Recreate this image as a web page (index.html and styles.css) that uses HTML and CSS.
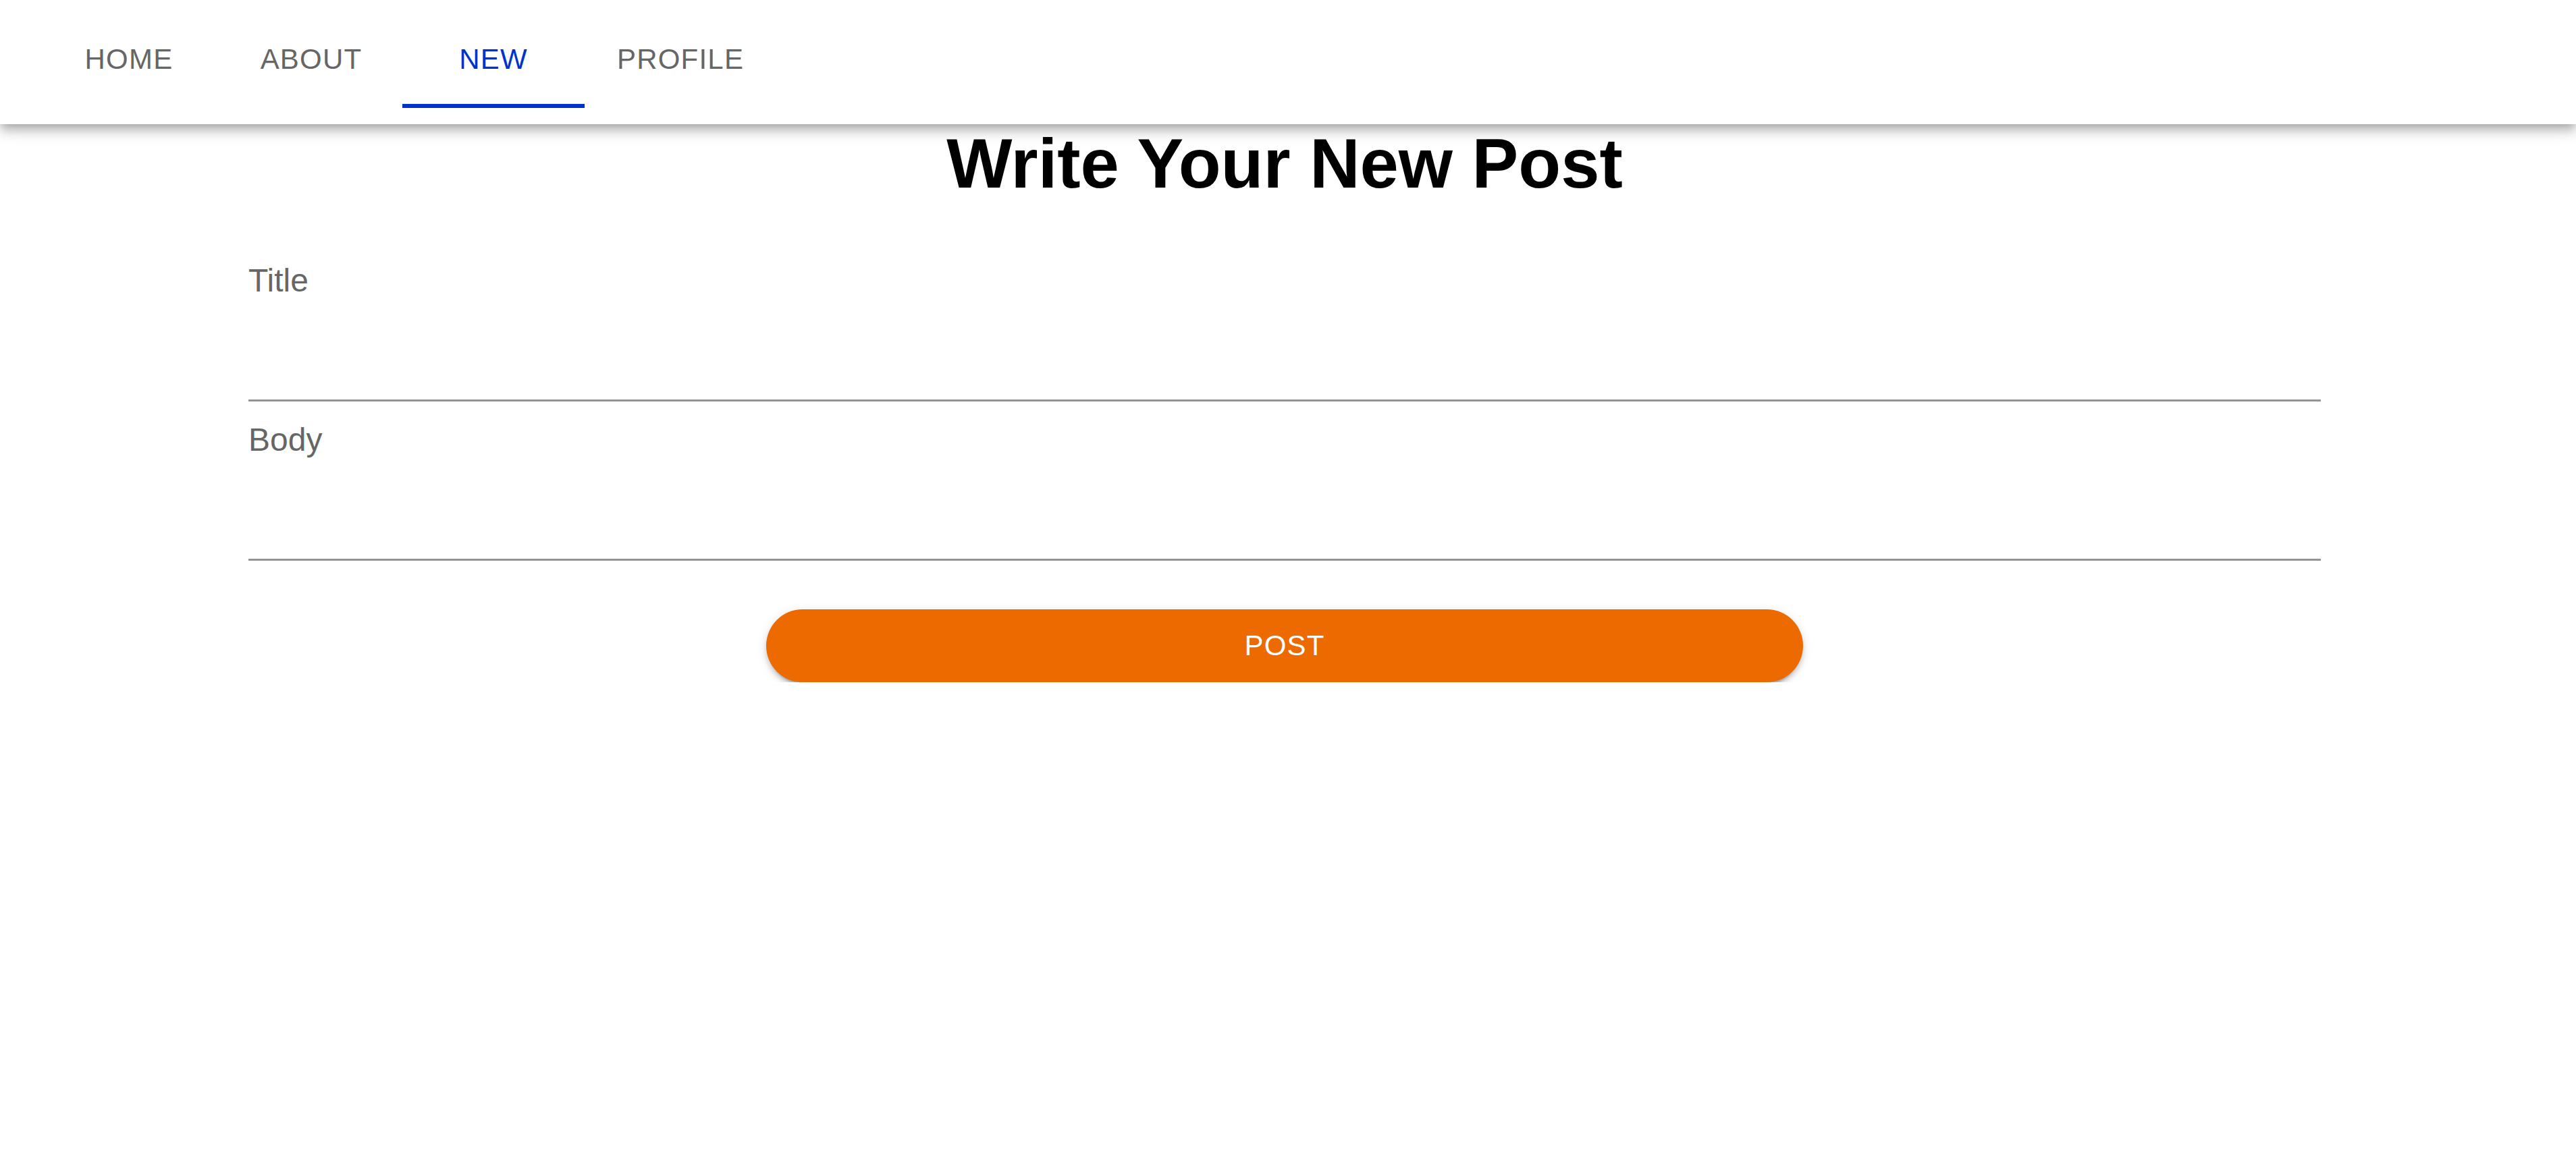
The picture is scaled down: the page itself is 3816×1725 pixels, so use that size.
FILE: index.html
```html
<!DOCTYPE html>
<html lang="en">
<head>
<meta charset="utf-8">
<title>New Post</title>
<link rel="stylesheet" href="styles.css">
</head>
<body>
<header class="appbar">
  <nav class="tabs">
    <a class="tab" href="#">Home</a>
    <a class="tab" href="#">About</a>
    <a class="tab tab-active" href="#">New</a>
    <a class="tab" href="#">Profile</a>
  </nav>
</header>
<main class="content">
  <h1 class="heading">Write Your New Post</h1>
  <form class="form">
    <div class="field">
      <label class="field-label" for="title">Title</label>
      <input class="field-input" id="title" type="text">
    </div>
    <div class="field">
      <label class="field-label" for="body">Body</label>
      <input class="field-input" id="body" type="text">
    </div>
    <div class="actions">
      <button class="post-btn" type="button">Post</button>
    </div>
  </form>
</main>
</body>
</html>
```
FILE: styles.css
```css
* { box-sizing: border-box; }
html, body {
  margin: 0;
  padding: 0;
  background: #ffffff;
  font-family: "Liberation Sans", Arial, sans-serif;
}
.appbar {
  position: relative;
  z-index: 2;
  background: #ffffff;
  height: 184px;
  padding: 16px 0 24px 56px;
  box-shadow: 0 6px 12px -3px rgba(0,0,0,0.2), 0 12px 15px 0 rgba(0,0,0,0.14), 0 3px 30px 0 rgba(0,0,0,0.12);
}
.tabs {
  display: flex;
  height: 144px;
}
.tab {
  min-width: 270px;
  padding: 0 48px;
  height: 144px;
  display: flex;
  align-items: center;
  justify-content: center;
  font-size: 42px;
  letter-spacing: 1.2px;
  text-transform: uppercase;
  color: #666666;
  text-decoration: none;
  border-bottom: 6px solid transparent;
  padding-top: 6px;
}
.tab-active {
  color: #0033cc;
  border-bottom-color: #0033cc;
}
.content {
  padding: 0 378px 0 368px;
}
.heading {
  margin: 0;
  font-size: 103px;
  line-height: 117px;
  font-weight: 700;
  color: #000000;
  text-align: center;
}
.form {
  display: flex;
  flex-direction: column;
  padding-top: 91px;
}
.field {
  display: flex;
  flex-direction: column;
  margin-bottom: 33px;
}
.field-label {
  font-size: 48px;
  line-height: 48px;
  color: #666666;
}
.field-input {
  height: 155px;
  border: none;
  border-bottom: 3px solid #949494;
  outline: none;
  background: transparent;
  font-size: 48px;
  font-family: inherit;
  padding: 0;
}
.actions {
  display: flex;
  justify-content: center;
  margin-top: 39px;
}
.post-btn {
  width: 1536px;
  height: 108px;
  border: none;
  border-radius: 54px;
  background: #ec6a00;
  color: #ffffff;
  font-family: inherit;
  font-size: 42px;
  letter-spacing: 1.2px;
  text-transform: uppercase;
  box-shadow: 0 9px 3px -6px rgba(0,0,0,0.2), 0 6px 6px 0 rgba(0,0,0,0.14), 0 3px 15px 0 rgba(0,0,0,0.12);
  cursor: pointer;
}
```
